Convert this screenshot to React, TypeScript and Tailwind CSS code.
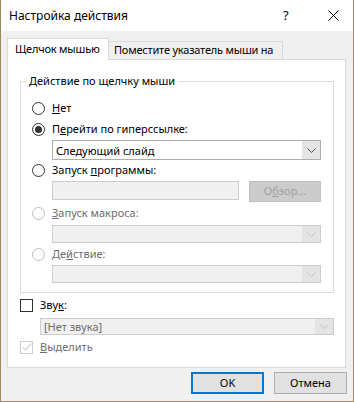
import React from 'react';

const font = { fontFamily: '"Segoe UI", "Noto Sans", sans-serif' };

const Chevron: React.FC<{ disabled?: boolean }> = ({ disabled }) => (
  <svg width="9" height="5" viewBox="0 0 9 5" className={disabled ? 'text-[#bfbfbf]' : 'text-[#505050]'}>
    <path d="M0.5 0.5 L4.5 4.5 L8.5 0.5" fill="none" stroke="currentColor" strokeWidth="1" />
  </svg>
);

const Radio: React.FC<{ checked?: boolean; disabled?: boolean }> = ({ checked, disabled }) => (
  <span
    className={`flex size-[13px] shrink-0 items-center justify-center rounded-full border bg-white ${
      disabled ? 'border-[#bcbcbc]' : 'border-[#333333]'
    }`}
  >
    {checked && <span className="size-[7px] rounded-full bg-[#333333]" />}
  </span>
);

const Select: React.FC<{ value?: string; disabled?: boolean; className?: string }> = ({ value, disabled, className }) => (
  <div
    className={`flex items-stretch border ${
      disabled ? 'border-[#cccccc] bg-[#f0f0f0] text-[#6d6d6d]' : 'border-[#adadad] bg-white text-black'
    } ${className ?? ''}`}
  >
    <span className="flex flex-1 items-center whitespace-nowrap pl-[3px] leading-none">{value}</span>
    <span className={`flex w-[18px] items-center justify-center ${disabled ? 'bg-[#e4e4e4]' : 'bg-[#e5e5e5]'}`}>
      <Chevron disabled={disabled} />
    </span>
  </div>
);

const RadioRow: React.FC<{ checked?: boolean; disabled?: boolean; className?: string; children: React.ReactNode }> = ({
  checked,
  disabled,
  className,
  children,
}) => (
  <div className={`flex items-center gap-[7px] ${disabled ? 'text-[#6d6d6d]' : 'text-black'} ${className ?? ''}`}>
    <Radio checked={checked} disabled={disabled} />
    <span>{children}</span>
  </div>
);

const App: React.FC = () => {
  return (
    <div style={font} className="flex h-[402px] w-[354px] flex-col border-x border-b border-[#9e8a5c] text-[11px] text-black">
      {/* title bar */}
      <div className="flex h-[31px] items-center bg-white pl-[8px] text-[12px]">
        <span className="flex-1">Настройка действия</span>
        <span className="w-[12px] text-[13px]">?</span>
        <span className="ml-[30px] mr-[12px] flex size-[16px] items-center justify-center">
          <svg width="11" height="11" viewBox="0 0 11 11">
            <path d="M0.5 0.5 L10.5 10.5 M10.5 0.5 L0.5 10.5" stroke="#000" strokeWidth="1" />
          </svg>
        </span>
      </div>

      <div className="flex flex-1 flex-col bg-[#f0f0f0] px-[6px] pt-[7px]">
        {/* tabs */}
        <div className="relative z-10 flex items-end whitespace-nowrap tracking-[-0.2px]">
          <div className="-mb-px flex h-[22px] w-[102px] items-center border border-b-0 border-[#d9d9d9] bg-white pl-[7px]">
            Щелчок мышью
          </div>
          <div className="flex h-[18px] w-[174px] items-center border border-b-0 border-l-0 border-[#d9d9d9] bg-[#f0f0f0] pl-[5px]">
            Поместите указатель мыши на
          </div>
        </div>

        {/* panel */}
        <div className="flex h-[309px] w-[339px] flex-col border border-[#d9d9d9] bg-white pl-[12px] pr-[11px]">
          <fieldset className="mt-[13px] h-[220px] border border-[#dcdcdc] pl-[11px] pr-[12px]">
            <legend className="-ml-[6px] px-[3px] leading-[16px]">Действие по щелчку мыши</legend>
            <RadioRow className="mt-[8px] h-[22px]">
              <u>Н</u>ет
            </RadioRow>
            <RadioRow checked className="h-[21px]">
              П<u>е</u>рейти по гиперссылке:
            </RadioRow>
            <Select value="Следующий слайд" className="ml-[20px] h-[20px]" />
            <RadioRow className="h-[20px]">
              Запуск <u>п</u>рограммы:
            </RadioRow>
            <div className="ml-[20px] mt-px flex gap-[10px]">
              <div className="h-[19px] w-[187px] border border-[#cccccc] bg-[#f0f0f0]" />
              <div className="flex h-[21px] flex-1 items-center justify-center border border-[#bfbfbf] bg-[#cccccc] text-[#a0a0a0]">
                О<u>б</u>зор...
              </div>
            </div>
            <RadioRow disabled className="h-[23px]">
              <u>З</u>апуск макроса:
            </RadioRow>
            <Select disabled className="ml-[20px] h-[18px]" />
            <RadioRow disabled className="h-[22px]">
              Де<u>й</u>ствие:
            </RadioRow>
            <Select disabled className="ml-[20px] h-[18px]" />
          </fieldset>

          <div className="mt-[3px] flex h-[19px] items-center gap-[7px]">
            <span className="size-[13px] border border-[#333333] bg-white" />
            <span>
              Зву<u>к</u>:
            </span>
          </div>
          <Select value="[Нет звука]" disabled className="ml-[20px] mt-[3px] h-[17px]" />
          <div className="mt-[3px] flex h-[18px] items-center gap-[7px] text-[#6d6d6d]">
            <span className="flex size-[13px] items-center justify-center border border-[#cccccc] bg-white">
              <svg width="10" height="8" viewBox="0 0 10 8">
                <path d="M0.5 4 L3.5 7 L9.5 0.5" fill="none" stroke="#bcbcbc" strokeWidth="1" />
              </svg>
            </span>
            <span>
              <u>В</u>ыделить
            </span>
          </div>
        </div>

        {/* buttons */}
        <div className="mt-[4px] flex justify-end gap-[10px]">
          <button className="h-[22px] w-[73px] border-2 border-[#0078d7] bg-[#e1e1e1] text-black">OK</button>
          <button className="h-[22px] w-[73px] border border-[#adadad] bg-[#e1e1e1] text-black">Отмена</button>
        </div>
      </div>
    </div>
  );
};

export default App;
